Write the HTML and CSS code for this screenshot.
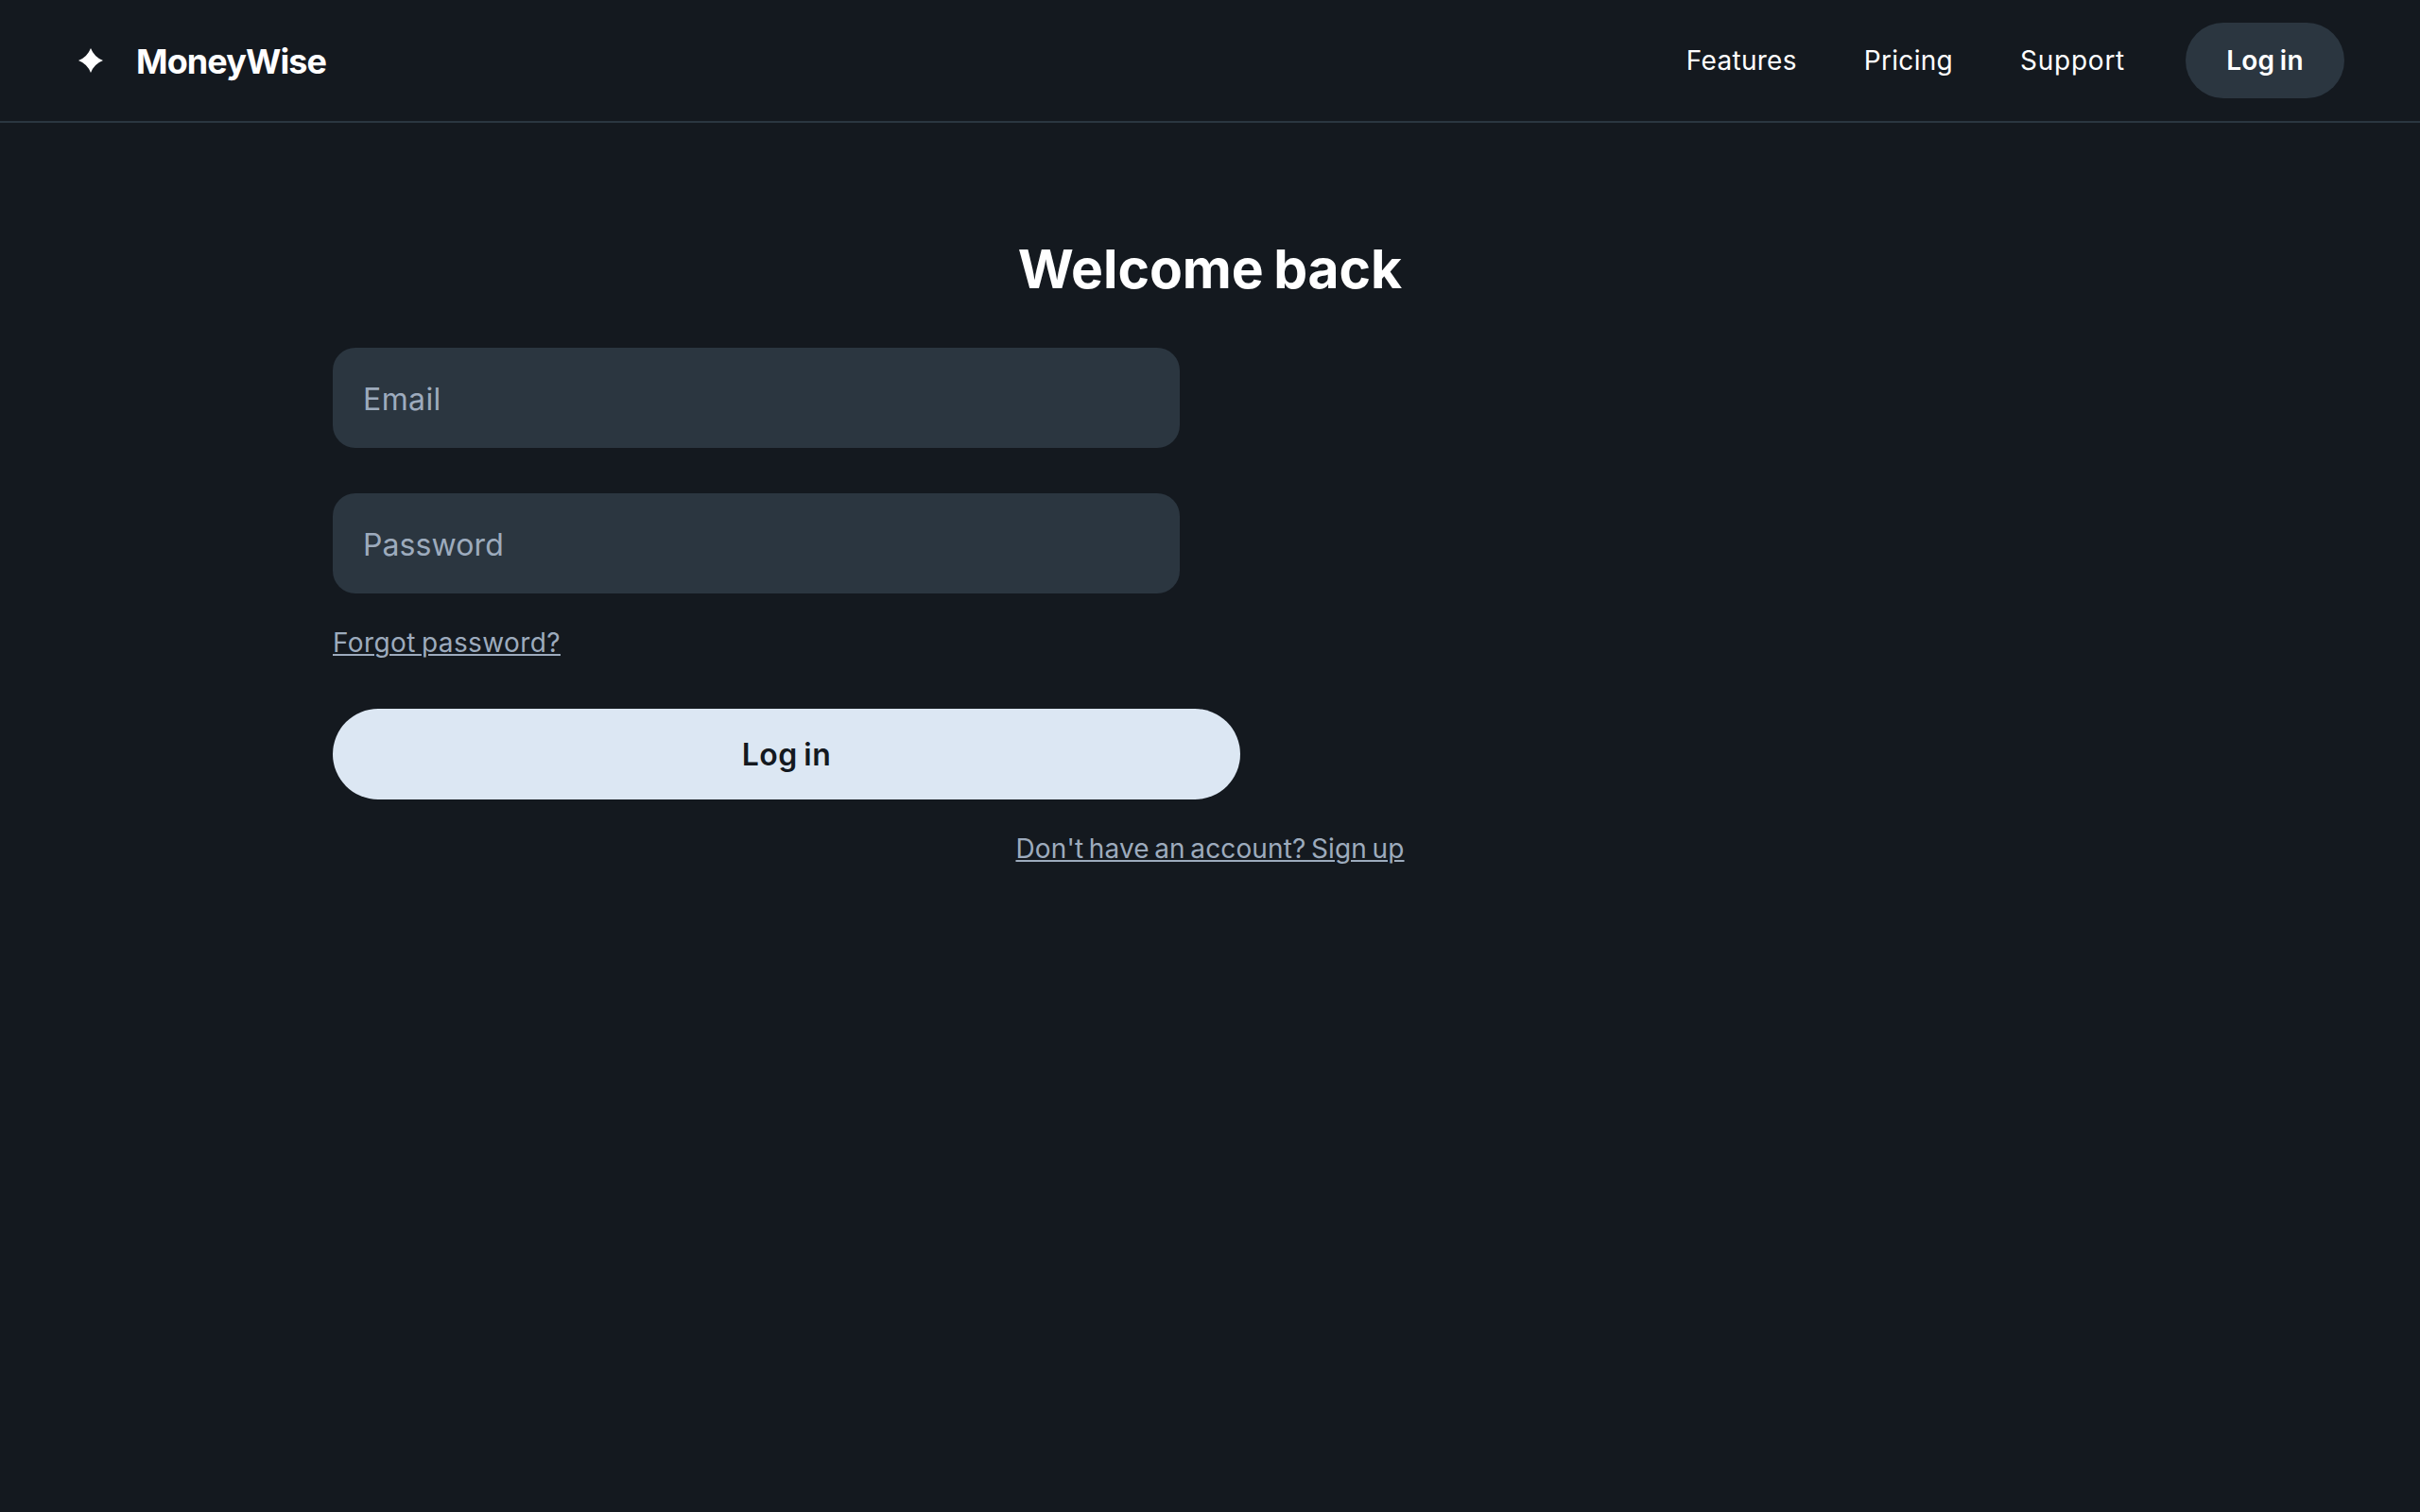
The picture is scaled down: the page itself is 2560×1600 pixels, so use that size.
FILE: index.html
```html
<!DOCTYPE html>
<html lang="en">
<head>
<meta charset="utf-8">
<title>MoneyWise</title>
<link rel="stylesheet" href="styles.css">
</head>
<body>
<header class="header">
  <a class="brand" href="#">
    <svg class="brand-mark" viewBox="0 0 32 32" aria-hidden="true"><path d="M16 3Q19.6 12.4 29 16Q19.6 19.6 16 29Q12.4 19.6 3 16Q12.4 12.4 16 3Z" fill="currentColor"/></svg>
    <span class="brand-name">MoneyWise</span>
  </a>
  <nav class="nav">
    <a class="nav-link features" href="#">Features</a>
    <a class="nav-link pricing" href="#">Pricing</a>
    <a class="nav-link support" href="#">Support</a>
    <a class="nav-button" href="#">Log in</a>
  </nav>
</header>
<main class="main">
  <h1 class="title">Welcome back</h1>
  <form class="form">
    <input class="field email" type="email" placeholder="Email" aria-label="Email">
    <input class="field" type="password" placeholder="Password" aria-label="Password">
    <a class="link forgot" href="#">Forgot password?</a>
    <button class="submit" type="button">Log in</button>
  </form>
  <a class="link signup" href="#">Don't have an account? Sign up</a>
</main>
</body>
</html>
```
FILE: styles.css
```css
* { box-sizing: border-box; }

body {
  margin: 0;
  min-height: 100vh;
  background: #14191f;
  color: #fff;
  font-family: Inter, sans-serif;
  font-size: 28px;
}

a { color: inherit; text-decoration: none; }

.header {
  display: flex;
  align-items: center;
  justify-content: space-between;
  height: 130px;
  padding: 0 80px;
  border-bottom: 2px solid #2b3640;
}

.brand { display: flex; align-items: center; gap: 32px; }
.brand-mark { width: 32px; height: 32px; }
.brand-name {
  padding-top: 2px;
  font-size: 36px;
  font-weight: 700;
  line-height: 46px;
  letter-spacing: -0.9px;
}

.nav { display: flex; align-items: center; }
.nav-link { margin-right: 71px; }
.features { letter-spacing: 0.3px; }
.pricing { letter-spacing: 0.3px; }
.support { margin-right: 64px; letter-spacing: 0.74px; }
.nav-button {
  display: flex;
  align-items: center;
  justify-content: center;
  width: 168px;
  height: 80px;
  border-radius: 40px;
  background: #2b3640;
  font-weight: 600;
  letter-spacing: 0.3px;
  word-spacing: -2px;
}

.main {
  display: flex;
  flex-direction: column;
  align-items: center;
  width: 1920px;
  margin: 0 auto;
  padding: 120px 32px 40px;
}

.title {
  margin: 0 0 48px;
  font-size: 57px;
  font-weight: 700;
  line-height: 70px;
  letter-spacing: -0.05px;
  word-spacing: -3px;
}

.form {
  display: flex;
  flex-direction: column;
  align-items: flex-start;
  width: 100%;
}

.field {
  width: 896px;
  height: 106px;
  margin: 0 0 48px;
  padding: 2px 32px 0;
  border: 0;
  border-radius: 24px;
  background: #2b3640;
  color: #fff;
  font: 400 32px Inter, sans-serif;
  letter-spacing: 0.1px;
}
.field + .field { margin-bottom: 32px; }
.field::placeholder { color: #9dabbd; opacity: 1; }
.email { letter-spacing: 0.4px; }

.link {
  color: #9dabbd;
  line-height: 40px;
  text-decoration: underline;
  text-decoration-thickness: 2px;
  text-underline-offset: 2px;
}
.forgot { margin-bottom: 50px; letter-spacing: 0.39px; word-spacing: -2px; }

.submit {
  width: 960px;
  height: 96px;
  margin-bottom: 32px;
  padding: 0;
  border: 0;
  border-radius: 48px;
  background: #dce7f3;
  color: #14191f;
  font: 600 32px Inter, sans-serif;
  letter-spacing: 0.5px;
  word-spacing: -2px;
}

.signup { letter-spacing: 0.14px; word-spacing: -2.5px; }
```
